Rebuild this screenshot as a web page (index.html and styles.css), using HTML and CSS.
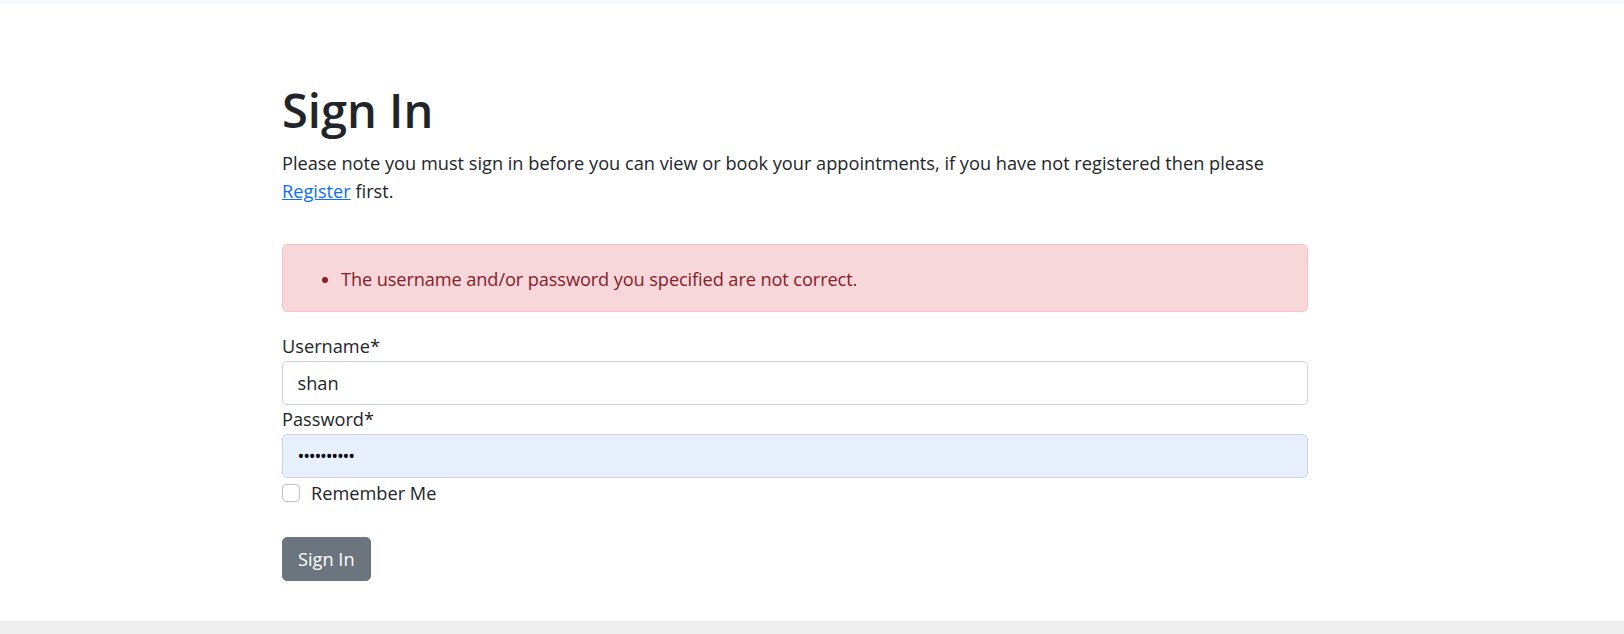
FILE: index.html
```html
<!DOCTYPE html>
<html lang="en">
<head>
<meta charset="utf-8">
<title>Sign In</title>
<link rel="stylesheet" href="styles.css">
</head>
<body>
<div class="topbar"></div>
<main class="page">
  <h1 class="title">Sign In</h1>
  <p class="intro">Please note you must sign in before you can view or book your appointments, if you have not registered then please <a href="#" class="link">Register</a> first.</p>
  <div class="alert">
    <ul class="alert-list">
      <li>The username and/or password you specified are not correct.</li>
    </ul>
  </div>
  <form class="form">
    <label class="label" for="username">Username*</label>
    <input class="input" id="username" type="text" value="shan">
    <label class="label" for="password">Password*</label>
    <input class="input input-filled" id="password" type="password" value="secretpass">
    <div class="check-row">
      <input class="check" id="remember" type="checkbox">
      <label class="check-label" for="remember">Remember Me</label>
    </div>
    <button class="btn" type="button">Sign In</button>
  </form>
</main>
<div class="footer"></div>
</body>
</html>
```
FILE: styles.css
```css
html, body {
  margin: 0;
  padding: 0;
  height: 634px;
  overflow: hidden;
  background: #ffffff;
}
body {
  font-family: "Open Sans", "Noto Sans", sans-serif;
  font-size: 18.2px;
  line-height: 28px;
  color: #212529;
}
.topbar {
  height: 4px;
  background: #f8f9fa;
}
.page {
  width: 1026px;
  margin-left: 282px;
  display: flex;
  flex-direction: column;
}
.title {
  margin: 78px 0 11px;
  font-size: 47px;
  line-height: 1.2;
  font-weight: 600;
}
.intro {
  margin: 0;
}
.link {
  color: #0d6efd;
  text-decoration: underline;
}
.alert {
  margin-top: 39px;
  box-sizing: border-box;
  height: 68px;
  padding: 20px 20px 18px;
  background: #f8d7da;
  border: 1px solid #f5c2c7;
  border-radius: 5px;
  color: #842029;
}
.alert-list {
  margin: 0;
  padding-left: 38px;
  letter-spacing: -0.1px;
}
.form {
  margin-top: 20px;
  display: flex;
  flex-direction: column;
  align-items: flex-start;
}
.label {
  display: block;
  margin-bottom: 1px;
}
.input {
  box-sizing: border-box;
  width: 100%;
  height: 44px;
  margin: 0;
  padding: 0 14.5px;
  border: 1px solid #ced4da;
  border-radius: 5px;
  font-family: inherit;
  font-size: 18.2px;
  color: #212529;
  background: #ffffff;
  outline: none;
}
.input-filled {
  background: #e8f0fe;
  color: #000000;
  letter-spacing: -1.2px;
}
.check-row {
  margin-top: 1px;
  display: flex;
  align-items: center;
  height: 28px;
}
.check {
  appearance: none;
  -webkit-appearance: none;
  box-sizing: border-box;
  width: 18px;
  height: 18px;
  margin: 0 11px 0 0;
  border: 1px solid #bfc3c7;
  border-radius: 4px;
  background: #ffffff;
}
.check-label {
  line-height: 28px;
}
.btn {
  margin-top: 30px;
  height: 44px;
  padding: 0 15px;
  border: 1px solid #6c757d;
  border-radius: 5px;
  background: #6c757d;
  color: #ffffff;
  font-family: inherit;
  font-size: 18.2px;
  line-height: 28px;
}
.footer {
  margin-top: 40px;
  height: 13px;
  background: #eeeeee;
}
```
